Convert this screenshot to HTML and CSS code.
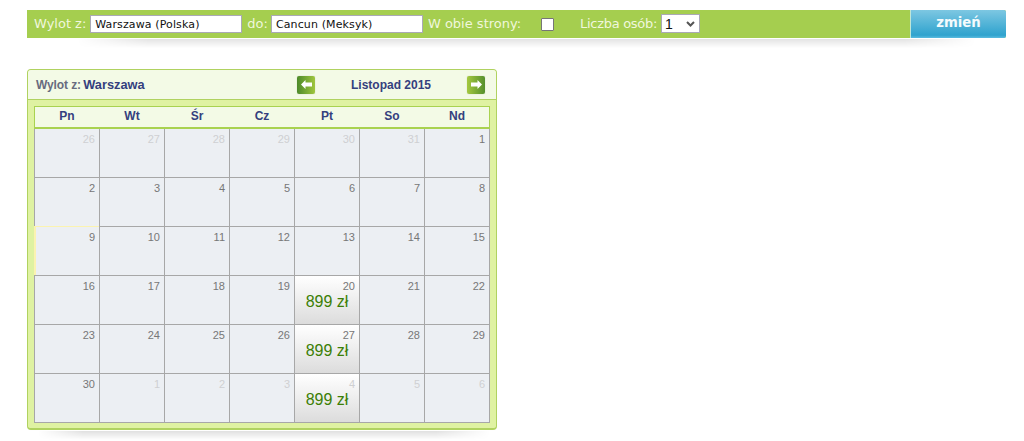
FILE: index.html
```html
<!DOCTYPE html>
<html lang="pl">
<head>
<meta charset="utf-8">
<title>Kalendarz lotów</title>
<link rel="stylesheet" href="styles.css">
</head>
<body>
<form class="search">
  <div class="fields">
    <label class="lbl" for="from">Wylot z:</label>
    <input class="txt" id="from" type="text" value="Warszawa (Polska)">
    <label class="lbl lbl-do" for="to">do:</label>
    <input class="txt" id="to" type="text" value="Cancun (Meksyk)">
    <label class="lbl lbl-both" for="both">W obie strony:</label>
    <input class="chk" id="both" type="checkbox">
    <label class="lbl lbl-count" for="count">Liczba osób:</label>
    <span class="sel" id="count">1<svg class="chev" width="9" height="6" viewBox="0 0 9 6"><path d="M1 1l3.5 3.5L8 1" fill="none" stroke="#555" stroke-width="2"/></svg></span>
  </div>
  <button class="go" type="button">zmień</button>
</form>

<section class="cal">
  <header class="cal-head">
    <div class="cal-title">Wylot z: <strong>Warszawa</strong></div>
    <div class="cal-nav">
      <span class="arrow arrow-prev"><svg width="11" height="9" viewBox="0 0 11 9"><path d="M0 4.500L4.500 0v2.500H11v4H4.500V9z" fill="#fff"/></svg></span>
      <span class="month">Listopad 2015</span>
      <span class="arrow arrow-next"><svg width="11" height="9" viewBox="0 0 11 9"><path d="M11 4.500L6.500 0v2.500H0v4h6.500V9z" fill="#fff"/></svg></span>
    </div>
  </header>
  <div class="cal-body">
    <div class="days">
      <span>Pn</span><span>Wt</span><span>Śr</span><span>Cz</span><span>Pt</span><span>So</span><span>Nd</span>
    </div>
    <div class="grid">
      <div class="c out">26</div><div class="c out">27</div><div class="c out">28</div><div class="c out">29</div><div class="c out">30</div><div class="c out">31</div><div class="c">1</div>
      <div class="c">2</div><div class="c">3</div><div class="c">4</div><div class="c">5</div><div class="c">6</div><div class="c">7</div><div class="c">8</div>
      <div class="c today">9</div><div class="c">10</div><div class="c">11</div><div class="c">12</div><div class="c">13</div><div class="c">14</div><div class="c">15</div>
      <div class="c">16</div><div class="c">17</div><div class="c">18</div><div class="c">19</div><div class="c deal">20<div class="price">899 zł</div></div><div class="c">21</div><div class="c">22</div>
      <div class="c">23</div><div class="c">24</div><div class="c">25</div><div class="c">26</div><div class="c deal">27<div class="price">899 zł</div></div><div class="c">28</div><div class="c">29</div>
      <div class="c">30</div><div class="c out">1</div><div class="c out">2</div><div class="c out">3</div><div class="c deal out">4<div class="price">899 zł</div></div><div class="c out">5</div><div class="c out">6</div>
    </div>
  </div>
</section>
</body>
</html>
```
FILE: styles.css
```css
* { box-sizing: border-box; }
html, body { margin: 0; background: #fff; }
body { padding: 10px 18px 0 27px; height: 441px; overflow: hidden; font-family: "Liberation Sans", Arial, sans-serif; }

.search {
  position: relative;
  display: flex; justify-content: space-between; height: 28px; width: 979px;
  background: #a5ce4f;
  border-radius: 0 2px 2px 0;
}
.search::after {
  content: ""; position: absolute; left: 50px; right: 30px; top: 29px; height: 9px;
  background: linear-gradient(rgba(0,0,0,.11), rgba(0,0,0,0));
  -webkit-mask-image: linear-gradient(90deg, transparent, #000 8%, #000 92%, transparent);
  mask-image: linear-gradient(90deg, transparent, #000 8%, #000 92%, transparent);
}
.fields { display: flex; align-items: center; padding: 0 0 0 7px; height: 28px; }
.lbl { font: 13px/16px "DejaVu Sans", Verdana, sans-serif; color: #f0f7dc; white-space: nowrap; }
.lbl-do { margin-left: 5px; }
.lbl-both { margin-left: 5px; }
.lbl-count { margin-left: 26px; letter-spacing: -.3px; }
.txt {
  width: 152px; height: 18px; margin: 0 0 0 4px; padding: 1px 4px 0 4px;
  border: 1px solid #aaa9b5; background: #fff; color: #111;
  font: 11px "DejaVu Sans", Verdana, sans-serif; letter-spacing: .12px; outline: 0;
}
#to { margin-left: 3px; }
.chk { appearance: none; width: 13px; height: 13px; margin: 0 0 0 20px; border: 1px solid #767676; border-radius: 1px; background: #fff; }
.sel {
  display: flex; align-items: center; justify-content: space-between;
  width: 39px; height: 19px; margin: 0 0 1px 4px; padding: 0 4px 0 3px;
  border: 1px solid #aaa9b5; background: #fff; color: #111;
  font: 14px "Liberation Sans", Arial, sans-serif;
}
.go {
  width: 96px; height: 28px; padding: 0 0 3px; border: 0; border-left: 1px solid #bfe6d8;
  border-radius: 0 2px 2px 0; color: #f4fbfd;
  background: linear-gradient(#7dc7e2, #2fa3ce 90%, #5bbbdf);
  font: bold 13.250px "DejaVu Sans", Verdana, sans-serif;
}

.cal {
  position: relative;
  width: 470px; height: 361px; margin-top: 31px;
  background: #dff2a2; border: 1px solid #b0d260; border-bottom-width: 2px; border-radius: 4px;
}
.cal::after {
  content: ""; position: absolute; left: 10px; right: 6px; top: 361px; height: 9px;
  background: linear-gradient(rgba(0,0,0,.12), rgba(0,0,0,0));
  -webkit-mask-image: linear-gradient(90deg, transparent, #000 10%, #000 88%, transparent);
  mask-image: linear-gradient(90deg, transparent, #000 10%, #000 88%, transparent);
}
.cal-head {
  display: flex; align-items: center; height: 30px;
  background: #f3fae6; border-bottom: 1px solid #b0d260; border-radius: 3px 3px 0 0;
  padding: 0 11px 0 8px; color: #34407e; font-weight: bold; font-size: 12px;
}
.cal-title { color: #676b7e; width: 261px; letter-spacing: -.1px; white-space: nowrap; }
.cal-title strong { color: #34407e; font-size: 12.800px; letter-spacing: 0; margin-left: -1px; }
.cal-nav { display: flex; align-items: center; justify-content: space-between; flex: 1; }
.arrow { display: flex; align-items: center; justify-content: center; width: 18px; height: 18px; border-radius: 2px; box-shadow: 0 0 1px rgba(0,0,0,.3); }
.arrow-prev { background: linear-gradient(90deg, #4d8a2a, #9fc63e); }
.arrow-next { background: linear-gradient(90deg, #a4c83f, #55902c); }

.cal-body { padding: 6px 6px 0; }
.days {
  display: grid; grid-template-columns: repeat(7, 65px); height: 23px; width: 456px;
  background: #f3fae6; border: 1px solid #a9d250; border-bottom-width: 2px;
  color: #34407e; font-size: 12px; font-weight: bold; line-height: 18px; text-align: center;
  text-indent: -1px;
}
.grid {
  display: grid; grid-template-columns: repeat(7, 65px); grid-template-rows: 48px repeat(5, 49px);
  width: 456px; border-left: 1px solid #a7a7a7; border-bottom: 1px solid #a7a7a7; background: #eceff3;
}
.c {
  border-right: 1px solid #a7a7a7; border-top: 1px solid #a7a7a7;
  padding: 4px 4px 0 0; text-align: right; color: #777; font-size: 11px; line-height: 13px;
}
.c:nth-child(-n+7) { border-top: 0; padding-top: 4px; }
.c.out { color: #cfd0d2; }
.today { position: relative; }
.today::before {
  content: ""; position: absolute; top: -1px; left: -1px; right: 0; bottom: 0;
  border-top: 1px solid #fbf3b0; border-left: 2px solid #fbf3b0;
}
.deal { background: linear-gradient(#fff, #dcdcdc); }
.price { margin: -1px 4px 0 0; text-align: center; color: #3c7f06; font-size: 16px; line-height: 20px; padding-left: 8px; }
```
